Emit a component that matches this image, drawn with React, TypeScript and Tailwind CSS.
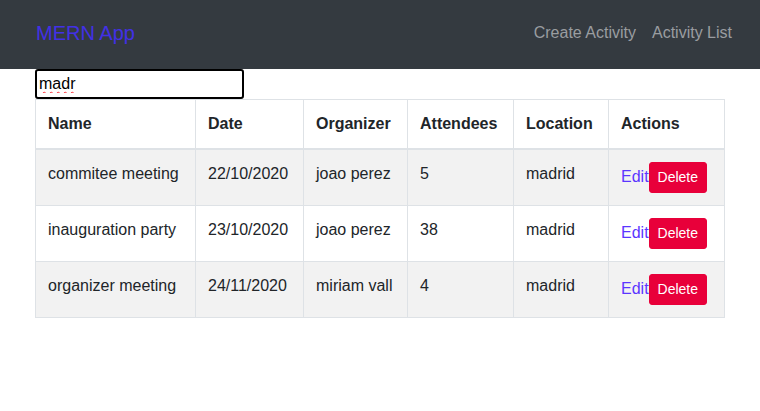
import React from "react";

const activities = [
  { name: "commitee meeting", date: "22/10/2020", organizer: "joao perez", attendees: 5, location: "madrid" },
  { name: "inauguration party", date: "23/10/2020", organizer: "joao perez", attendees: 38, location: "madrid" },
  { name: "organizer meeting", date: "24/11/2020", organizer: "miriam vall", attendees: 4, location: "madrid" },
];

const headers = ["Name", "Date", "Organizer", "Attendees", "Location", "Actions"];
const widths = ["w-[160px]", "w-[108px]", "w-[104px]", "w-[106px]", "w-[95px]", "w-[116px]"];

export default function App() {
  return (
    <div className="min-h-[411px] bg-white text-[#212529] font-['Liberation_Sans',Arial,sans-serif]">
      {/* Navbar */}
      <nav className="h-[69px] bg-[#343a40] flex items-center justify-between pl-[36px] pr-[20px] pb-[3px]">
        <a href="#" className="text-[20px] leading-[30px] text-[#4230e6]">
          MERN App
        </a>
        <div className="flex items-center">
          <a href="#" className="px-2 text-base leading-6 text-[#9a9da0]">
            Create Activity
          </a>
          <a href="#" className="px-2 text-base leading-6 text-[#9a9da0]">
            Activity List
          </a>
        </div>
      </nav>

      <div className="px-[35px]">
        <input
          type="text"
          defaultValue="madr"
          className="block w-[209px] h-[30px] border-2 border-black rounded-[3px] px-[2px] text-base text-black outline-none underline decoration-wavy decoration-red-500 decoration-1 underline-offset-2"
        />

        {/* Table */}
        <table className="w-[689px] table-fixed border-collapse border border-[#dee2e6] text-base">
          <thead>
            <tr>
              {headers.map((h, i) => (
                <th
                  key={h}
                  className={`${widths[i]} text-left font-bold p-3 leading-6 align-bottom border border-[#dee2e6] border-b-2`}
                >
                  {h}
                </th>
              ))}
            </tr>
          </thead>
          <tbody>
            {activities.map((a, i) => (
              <tr key={a.name} className={i % 2 === 0 ? "bg-[#f2f2f2]" : "bg-white"}>
                <td className="p-3 leading-6 align-top border border-[#dee2e6]">{a.name}</td>
                <td className="p-3 leading-6 align-top border border-[#dee2e6]">{a.date}</td>
                <td className="p-3 leading-6 align-top border border-[#dee2e6]">{a.organizer}</td>
                <td className="p-3 leading-6 align-top border border-[#dee2e6]">{a.attendees}</td>
                <td className="p-3 leading-6 align-top border border-[#dee2e6]">{a.location}</td>
                <td className="p-3 leading-6 align-top border border-[#dee2e6] whitespace-nowrap">
                  <a href="#" className="text-[#5b36ff]">Edit</a>
                  <button className="bg-[#e8003a] text-white text-sm leading-[21px] px-2 py-1 border border-[#e8003a] rounded-[3px]">
                    Delete
                  </button>
                </td>
              </tr>
            ))}
          </tbody>
        </table>
      </div>
    </div>
  );
}
